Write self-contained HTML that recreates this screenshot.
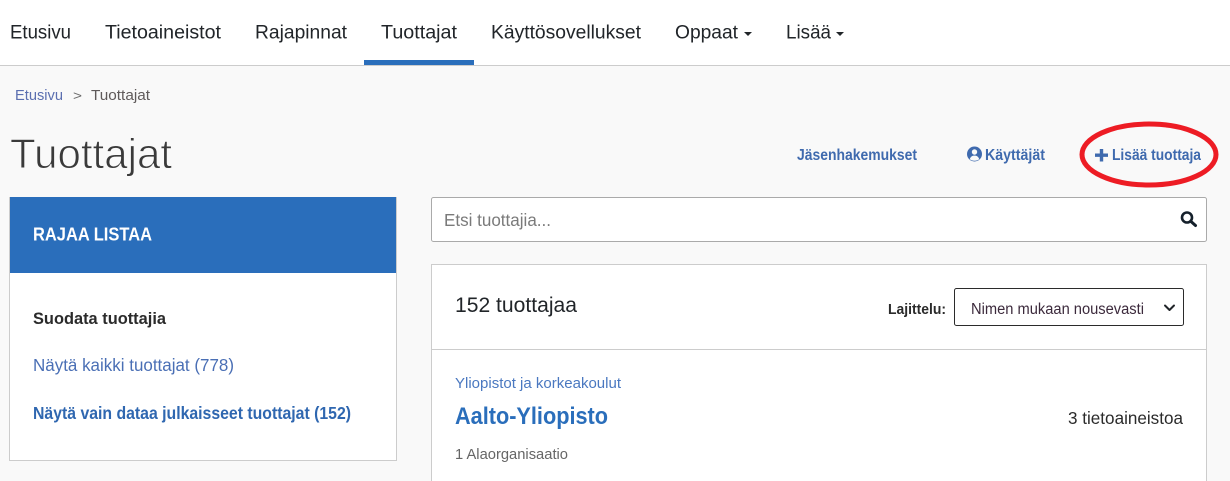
<!DOCTYPE html>
<html lang="fi">
<head>
<meta charset="utf-8">
<title>Tuottajat</title>
<style>
html,body{margin:0;padding:0;width:1230px;height:481px;overflow:hidden;background:#f9f9f9}
svg{display:block}
text{font-family:"Liberation Sans",Arial,sans-serif}
.b{font-weight:700}
</style>
</head>
<body>
<svg width="1230" height="481" viewBox="0 0 1230 481" xmlns="http://www.w3.org/2000/svg">
<rect x="0" y="0" width="1230" height="65" fill="#fff"/>
<rect x="0" y="65" width="1230" height="1" fill="#cccccc"/>
<rect x="364" y="60" width="110" height="5" fill="#2a6ebb"/>
<g font-size="19" fill="#212529">
<text x="10" y="38.500" textLength="61" lengthAdjust="spacingAndGlyphs">Etusivu</text>
<text x="105" y="38.500" textLength="116" lengthAdjust="spacingAndGlyphs">Tietoaineistot</text>
<text x="255" y="38.500" textLength="92" lengthAdjust="spacingAndGlyphs">Rajapinnat</text>
<text x="381" y="38.500" textLength="76" lengthAdjust="spacingAndGlyphs">Tuottajat</text>
<text x="491" y="38.500" textLength="150" lengthAdjust="spacingAndGlyphs">Käyttösovellukset</text>
<text x="675" y="38.500" textLength="63" lengthAdjust="spacingAndGlyphs">Oppaat</text>
<text x="786" y="38.500" textLength="45" lengthAdjust="spacingAndGlyphs">Lisää</text>
</g>
<path d="M744 32h8l-4 4z" fill="#212529"/>
<path d="M836 32h8l-4 4z" fill="#212529"/>

<text x="15" y="100" font-size="14.500" fill="#5b6fb0" textLength="48" lengthAdjust="spacingAndGlyphs">Etusivu</text>
<text x="73" y="100" font-size="13" fill="#6b6b6b" textLength="9" lengthAdjust="spacingAndGlyphs">&gt;</text>
<text x="91" y="100" font-size="14.500" fill="#5f5a5a" textLength="59" lengthAdjust="spacingAndGlyphs">Tuottajat</text>

<text x="10" y="168" font-size="42" fill="#3a3a3a" stroke="#f9f9f9" stroke-width="0.900" paint-order="fill stroke" textLength="162" lengthAdjust="spacingAndGlyphs">Tuottajat</text>

<g font-size="15.500" class="b" fill="#3f6aae">
<text x="797" y="160" textLength="120" lengthAdjust="spacingAndGlyphs">Jäsenhakemukset</text>
<text x="985" y="160" textLength="60" lengthAdjust="spacingAndGlyphs">Käyttäjät</text>
<text x="1112" y="160" textLength="89" lengthAdjust="spacingAndGlyphs">Lisää tuottaja</text>
</g>
<circle cx="974.500" cy="154" r="7.500" fill="#3f6aae"/>
<circle cx="974.500" cy="152" r="2.700" fill="#f9f9f9"/>
<path d="M969.800 159.200c.8-2.800 2.600-3.600 4.700-3.600s3.900.8 4.700 3.600c-1.300 1-2.900 1.500-4.700 1.500s-3.400-.5-4.700-1.500z" fill="#f9f9f9"/>
<path d="M1101.500 149v12.500M1095 155.200h13" stroke="#3f6aae" stroke-width="3.400" fill="none"/>
<ellipse cx="1149" cy="154.500" rx="67" ry="30.500" fill="none" stroke="#ed1c24" stroke-width="5"/>

<rect x="9.500" y="197.500" width="387" height="263" fill="#fff" stroke="#cccccc"/>
<rect x="10" y="197" width="386" height="76" fill="#2a6ebb"/>
<text x="33" y="240.500" font-size="18.500" class="b" fill="#fff" textLength="119" lengthAdjust="spacingAndGlyphs">RAJAA LISTAA</text>
<text x="33" y="324" font-size="17" class="b" fill="#2b2b2b" textLength="133" lengthAdjust="spacingAndGlyphs">Suodata tuottajia</text>
<text x="33" y="371" font-size="17.500" fill="#4a6fb5" textLength="201" lengthAdjust="spacingAndGlyphs">Näytä kaikki tuottajat (778)</text>
<text x="33" y="419" font-size="17.500" class="b" fill="#2f67b0" textLength="318" lengthAdjust="spacingAndGlyphs">Näytä vain dataa julkaisseet tuottajat (152)</text>

<rect x="431.500" y="197.500" width="775" height="44" rx="2" fill="#fff" stroke="#aaaaaa"/>
<text x="444" y="226" font-size="17.500" fill="#7a7a7a" textLength="107" lengthAdjust="spacingAndGlyphs">Etsi tuottajia...</text>
<circle cx="1187" cy="217.500" r="5" fill="none" stroke="#15202b" stroke-width="2.600"/>
<path d="M1191 221.500l4.500 4" stroke="#15202b" stroke-width="3" stroke-linecap="round"/>

<rect x="431.500" y="264.500" width="775" height="230" fill="#fff" stroke="#cccccc"/>
<rect x="432" y="349" width="774" height="1" fill="#cccccc"/>
<text x="455" y="312" font-size="21" fill="#212529" textLength="122" lengthAdjust="spacingAndGlyphs">152 tuottajaa</text>
<text x="888" y="314" font-size="15" class="b" fill="#2b2b2b" textLength="58" lengthAdjust="spacingAndGlyphs">Lajittelu:</text>
<rect x="954.500" y="288.500" width="229" height="37" rx="2" fill="#fff" stroke="#2b2b2b"/>
<text x="971" y="314" font-size="15.500" fill="#3c2a3c" textLength="173" lengthAdjust="spacingAndGlyphs">Nimen mukaan nousevasti</text>
<path d="M1165 305.500l4.500 4.500 4.500-4.500" fill="none" stroke="#212529" stroke-width="2" stroke-linecap="round" stroke-linejoin="round"/>

<text x="455" y="388" font-size="15" fill="#4a78c0" textLength="166" lengthAdjust="spacingAndGlyphs">Yliopistot ja korkeakoulut</text>
<text x="455" y="424" font-size="24" class="b" fill="#2a6ebb" textLength="153" lengthAdjust="spacingAndGlyphs">Aalto-Yliopisto</text>
<text x="1068" y="424" font-size="17.500" fill="#2b2b2b" textLength="115" lengthAdjust="spacingAndGlyphs">3 tietoaineistoa</text>
<text x="455" y="459" font-size="15" fill="#666666" textLength="113" lengthAdjust="spacingAndGlyphs">1 Alaorganisaatio</text>
</svg>
</body>
</html>
